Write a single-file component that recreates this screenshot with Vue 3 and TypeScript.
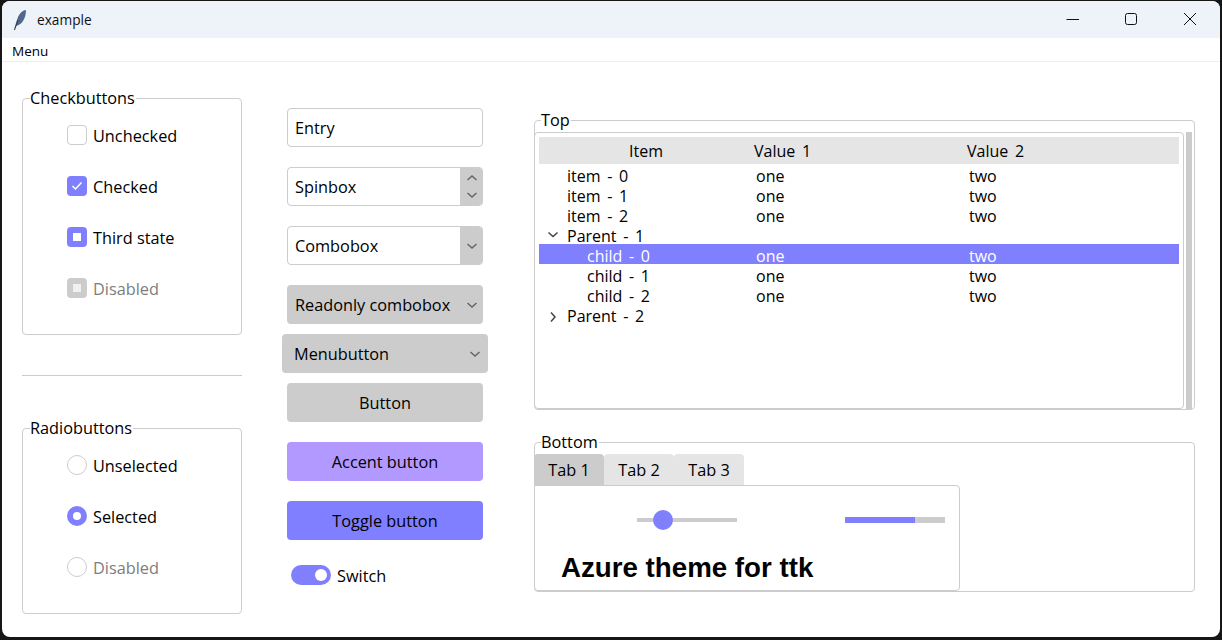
<script setup lang="ts">
const checks = [
  { label: 'Unchecked', state: 'off' },
  { label: 'Checked', state: 'on' },
  { label: 'Third state', state: 'third' },
  { label: 'Disabled', state: 'disabled' },
];
const radios = [
  { label: 'Unselected', state: 'off' },
  { label: 'Selected', state: 'on' },
  { label: 'Disabled', state: 'disabled' },
];
const rows = [
  { name: 'item - 0', one: 'one', two: 'two', level: 0 },
  { name: 'item - 1', one: 'one', two: 'two', level: 0 },
  { name: 'item - 2', one: 'one', two: 'two', level: 0 },
  { name: 'Parent - 1', one: '', two: '', level: 0, arrow: 'down' },
  { name: 'child - 0', one: 'one', two: 'two', level: 1, selected: true },
  { name: 'child - 1', one: 'one', two: 'two', level: 1 },
  { name: 'child - 2', one: 'one', two: 'two', level: 1 },
  { name: 'Parent - 2', one: '', two: '', level: 0, arrow: 'right' },
];
const tabs = ['Tab 1', 'Tab 2', 'Tab 3'];
</script>

<template>
  <div class="window">
    <header class="titlebar">
      <svg class="feather" width="14" height="22" viewBox="0 0 14 22">
        <path d="M1 21 C3 14 4 11 5 8 C7 4 10 1 13 1 C13 5 12 9 10 12 C8 15 6 16 3 17 Z" fill="#50688c" />
        <path d="M1.5 21 L5 11" stroke="#2c3a50" stroke-width="1" fill="none" />
      </svg>
      <span class="title">example</span>
      <div class="controls">
        <svg width="14" height="14" viewBox="0 0 14 14"><path d="M1.5 7.5H14" stroke="#111" stroke-width="1" /></svg>
        <svg width="14" height="14" viewBox="0 0 14 14"><rect x="1.5" y="1.5" width="11" height="11" rx="2" fill="none" stroke="#111" stroke-width="1" /></svg>
        <svg width="14" height="14" viewBox="0 0 14 14"><path d="M1 1L13 13M13 1L1 13" stroke="#111" stroke-width="1" /></svg>
      </div>
    </header>
    <nav class="menubar">Menu</nav>

    <main class="content">
      <section class="col-left">
        <div class="frame frame-checks">
          <span class="frame-label">Checkbuttons</span>
          <div class="choice-list">
            <div v-for="c in checks" :key="c.label" class="choice" :class="{ muted: c.state === 'disabled' }">
              <span class="check" :class="c.state">
                <svg v-if="c.state === 'on'" width="12" height="10" viewBox="0 0 12 10"><path d="M1.5 5L4.5 8L10.5 1.5" fill="none" stroke="#fff" stroke-width="1.5" /></svg>
                <i v-else-if="c.state !== 'off'"></i>
              </span>
              {{ c.label }}
            </div>
          </div>
        </div>
        <div class="separator"></div>
        <div class="frame frame-radios">
          <span class="frame-label">Radiobuttons</span>
          <div class="choice-list">
            <div v-for="r in radios" :key="r.label + r.state" class="choice" :class="{ muted: r.state === 'disabled' }">
              <span class="radio" :class="r.state"></span>
              {{ r.label }}
            </div>
          </div>
        </div>
      </section>

      <section class="col-mid">
        <div class="field gap-none">Entry</div>
        <div class="field has-side">
          <span>Spinbox</span>
          <span class="side spin">
            <svg width="12" height="8" viewBox="0 0 12 8"><path d="M1.5 6L6 2L10.5 6" class="chev" /></svg>
            <svg width="12" height="8" viewBox="0 0 12 8"><path d="M1.5 2L6 6L10.5 2" class="chev" /></svg>
          </span>
        </div>
        <div class="field has-side">
          <span>Combobox</span>
          <span class="side">
            <svg width="12" height="8" viewBox="0 0 12 8"><path d="M1.5 2L6 6L10.5 2" class="chev" /></svg>
          </span>
        </div>
        <div class="btn readonly">
          <span>Readonly combobox</span>
          <svg width="12" height="8" viewBox="0 0 12 8"><path d="M1.5 2L6 6L10.5 2" class="chev" /></svg>
        </div>
        <div class="btn menubutton">
          <span>Menubutton</span>
          <svg width="12" height="8" viewBox="0 0 12 8"><path d="M1.5 2L6 6L10.5 2" class="chev" /></svg>
        </div>
        <div class="btn plain">Button</div>
        <div class="btn plain accent">Accent button</div>
        <div class="btn plain toggle">Toggle button</div>
        <div class="switch-row">
          <span class="switch"><i></i></span>
          Switch
        </div>
      </section>

      <section class="col-right">
        <div class="frame frame-top">
          <span class="frame-label">Top</span>
          <div class="tree-wrap">
            <div class="tree">
              <div class="tree-head">
                <span class="head-item">Item</span>
                <span class="head-val">Value 1</span>
                <span class="head-val">Value 2</span>
              </div>
              <div v-for="row in rows" :key="row.name" class="tree-row" :class="{ selected: row.selected }">
                <span class="cell-name" :class="{ child: row.level === 1 }">
                  <svg v-if="row.arrow === 'down'" class="arrow" width="12" height="8" viewBox="0 0 12 8"><path d="M1.5 1.5L6 5.5L10.5 1.5" class="chev dark" /></svg>
                  <svg v-if="row.arrow === 'right'" class="arrow" width="12" height="12" viewBox="0 0 12 12"><path d="M4 1.5L8 6L4 10.5" class="chev dark" /></svg>
                  {{ row.name }}
                </span>
                <span class="cell-val">{{ row.one }}</span>
                <span class="cell-val">{{ row.two }}</span>
              </div>
            </div>
            <div class="scrollbar"></div>
          </div>
        </div>

        <div class="frame frame-bottom">
          <span class="frame-label">Bottom</span>
          <div class="tabs">
            <span v-for="(t, i) in tabs" :key="t" class="tab" :class="{ active: i === 0 }">{{ t }}</span>
          </div>
          <div class="panel">
            <div class="widgets">
              <div class="scale"><i></i></div>
              <div class="progress"><i :style="{ width: '70%' }"></i></div>
            </div>
            <div class="azure">Azure theme for ttk</div>
          </div>
        </div>
      </section>
    </main>
  </div>
</template>

<style>
html, body {
  background: #161616;
}
</style>

<style scoped>
.window {
  box-sizing: border-box;
  width: 1218px;
  height: 636px;
  margin: 1px 2px 3px 2px;
  background: #fff;
  border-radius: 8px;
  overflow: hidden;
  font-family: "Open Sans", "Noto Sans", sans-serif;
  font-size: 16.3px;
  color: #000;
}
.titlebar {
  height: 37px;
  background: #eef2f9;
  display: flex;
  align-items: center;
  padding-left: 11px;
}
.feather {
  margin-right: 10px;
}
.title {
  font-size: 13.7px;
  color: #111;
}
.controls {
  margin-left: auto;
  display: flex;
  gap: 45px;
  padding-right: 23px;
  margin-top: -1px;
}
.menubar {
  height: 23px;
  line-height: 26px;
  font-size: 13.5px;
  padding-left: 10px;
  border-bottom: 1px solid #efefef;
}
.content {
  display: flex;
  padding-left: 20px;
}
.frame {
  box-sizing: border-box;
  border: 1px solid #ccc;
  border-radius: 4px;
}
.frame-label {
  display: block;
  width: fit-content;
  height: 20px;
  line-height: 20px;
  margin: -11px 0 0 7px;
  padding: 0 1px 0 0;
  background: #fff;
}
.col-left {
  width: 220px;
  padding-top: 36px;
  margin-right: 40px;
}
.frame-checks {
  height: 237px;
}
.frame-radios {
  height: 186px;
  margin-top: 52px;
}
.separator {
  height: 1px;
  background: #ccc;
  margin-top: 40px;
}
.choice-list {
  display: flex;
  flex-direction: column;
  gap: 31px;
  margin-top: 17px;
  padding-left: 44px;
}
.choice {
  display: flex;
  align-items: flex-start;
  gap: 6px;
  height: 20px;
  line-height: 22px;
}
.muted {
  color: #7d7d7d;
}
.check {
  box-sizing: border-box;
  width: 20px;
  height: 20px;
  border-radius: 4px;
  display: flex;
  align-items: center;
  justify-content: center;
}
.check.off {
  border: 1px solid #ccc;
}
.check.on,
.check.third {
  background: #8080ff;
}
.check.disabled {
  background: #ccc;
}
.check i {
  width: 8px;
  height: 8px;
  background: #fff;
}
.check.disabled i {
  background: #f0f0f0;
}
.radio {
  box-sizing: border-box;
  width: 20px;
  height: 20px;
  border-radius: 50%;
  border: 1px solid #ccc;
}
.radio.on {
  border: 6px solid #8080ff;
  background: #fff;
}
.col-mid {
  width: 206px;
  padding-top: 46px;
  margin-right: 46px;
  display: flex;
  flex-direction: column;
}
.field {
  box-sizing: border-box;
  width: 196px;
  height: 39px;
  margin: 20px 5px 0;
  border: 1px solid #ccc;
  border-radius: 4px;
  display: flex;
  align-items: center;
  padding-left: 7px;
  overflow: hidden;
}
.gap-none {
  margin-top: 0;
}
.has-side {
  justify-content: space-between;
  padding-right: 0;
}
.side {
  width: 23px;
  height: 39px;
  margin-right: -1px;
  background: #ccc;
  display: flex;
  align-items: center;
  justify-content: center;
}
.spin {
  flex-direction: column;
  gap: 9px;
}
.chev {
  fill: none;
  stroke: #666;
  stroke-width: 1.5;
}
.chev.dark {
  stroke: #444;
}
.btn {
  box-sizing: border-box;
  height: 39px;
  background: #ccc;
  border-radius: 4px;
  display: flex;
  align-items: center;
}
.readonly {
  width: 196px;
  margin: 20px 5px 0;
  padding: 0 5px 0 8px;
  justify-content: space-between;
}
.menubutton {
  width: 206px;
  margin-top: 10px;
  padding: 0 7px 0 12px;
  justify-content: space-between;
}
.plain {
  width: 196px;
  margin: 20px 5px 0;
  justify-content: center;
}
.menubutton + .plain {
  margin-top: 10px;
}
.accent {
  background: #b299ff;
}
.toggle {
  background: #7f7fff;
}
.switch-row {
  display: flex;
  align-items: flex-start;
  gap: 6px;
  height: 20px;
  line-height: 22px;
  margin: 25px 0 0 9px;
}
.switch {
  width: 40px;
  height: 20px;
  border-radius: 10px;
  background: #8080ff;
  display: flex;
  align-items: center;
  justify-content: flex-end;
  padding-right: 4px;
  box-sizing: border-box;
}
.switch i {
  width: 12px;
  height: 12px;
  border-radius: 50%;
  background: #fff;
}
.col-right {
  width: 661px;
  padding-top: 58px;
}
.col-right .frame-label {
  margin-left: 6px;
}
.frame-top {
  height: 290px;
}
.tree-wrap {
  display: flex;
  gap: 2px;
  margin: 2px 0 0 -1px;
}
.tree {
  box-sizing: border-box;
  width: 650px;
  height: 277px;
  border: 1px solid #ccc;
  border-radius: 4px;
  padding: 4px 4px 0;
  font-size: 16px;
  word-spacing: 2.5px;
}
.scrollbar {
  width: 6px;
  height: 277px;
  background: #ccc;
}
.tree-head {
  display: grid;
  grid-template-columns: 214px 213px 1fr;
  height: 27px;
  line-height: 29px;
  background: #e5e5e5;
}
.head-item {
  text-align: center;
}
.head-val {
  padding-left: 1px;
}
.tree-row {
  display: grid;
  grid-template-columns: 214px 213px 1fr;
  height: 20px;
  line-height: 25px;
}
.tree-row.selected {
  background: #8080ff;
  color: #fff;
}
.cell-name {
  position: relative;
  padding-left: 28px;
}
.cell-name.child {
  padding-left: 48px;
}
.arrow {
  position: absolute;
  left: 8px;
  top: 7px;
}
.cell-val {
  padding-left: 3px;
}
.frame-bottom {
  height: 150px;
  margin-top: 32px;
}
.tabs {
  display: flex;
  margin: 2px 0 0 -1px;
}
.tab {
  width: 70px;
  height: 31px;
  line-height: 33px;
  text-align: center;
  background: #e5e5e5;
  border-radius: 4px 4px 0 0;
}
.tab.active {
  background: #ccc;
}
.panel {
  box-sizing: border-box;
  width: 426px;
  height: 106px;
  margin-left: -1px;
  border: 1px solid #ccc;
  border-radius: 0 4px 4px 4px;
  background: #fff;
}
.widgets {
  display: flex;
  align-items: center;
  height: 20px;
  margin-top: 24px;
  padding-left: 102px;
  gap: 108px;
}
.scale {
  position: relative;
  width: 100px;
  height: 4px;
  background: #ccc;
}
.scale i {
  position: absolute;
  left: 16px;
  top: -8px;
  width: 20px;
  height: 20px;
  border-radius: 50%;
  background: #8080ff;
}
.progress {
  width: 100px;
  height: 6px;
  background: #ccc;
}
.progress i {
  display: block;
  height: 100%;
  background: #8080ff;
}
.azure {
  margin: 22px 0 0 26px;
  font-family: "Liberation Sans", Arial, sans-serif;
  font-weight: 700;
  font-size: 27.7px;
  line-height: 32px;
}
</style>
